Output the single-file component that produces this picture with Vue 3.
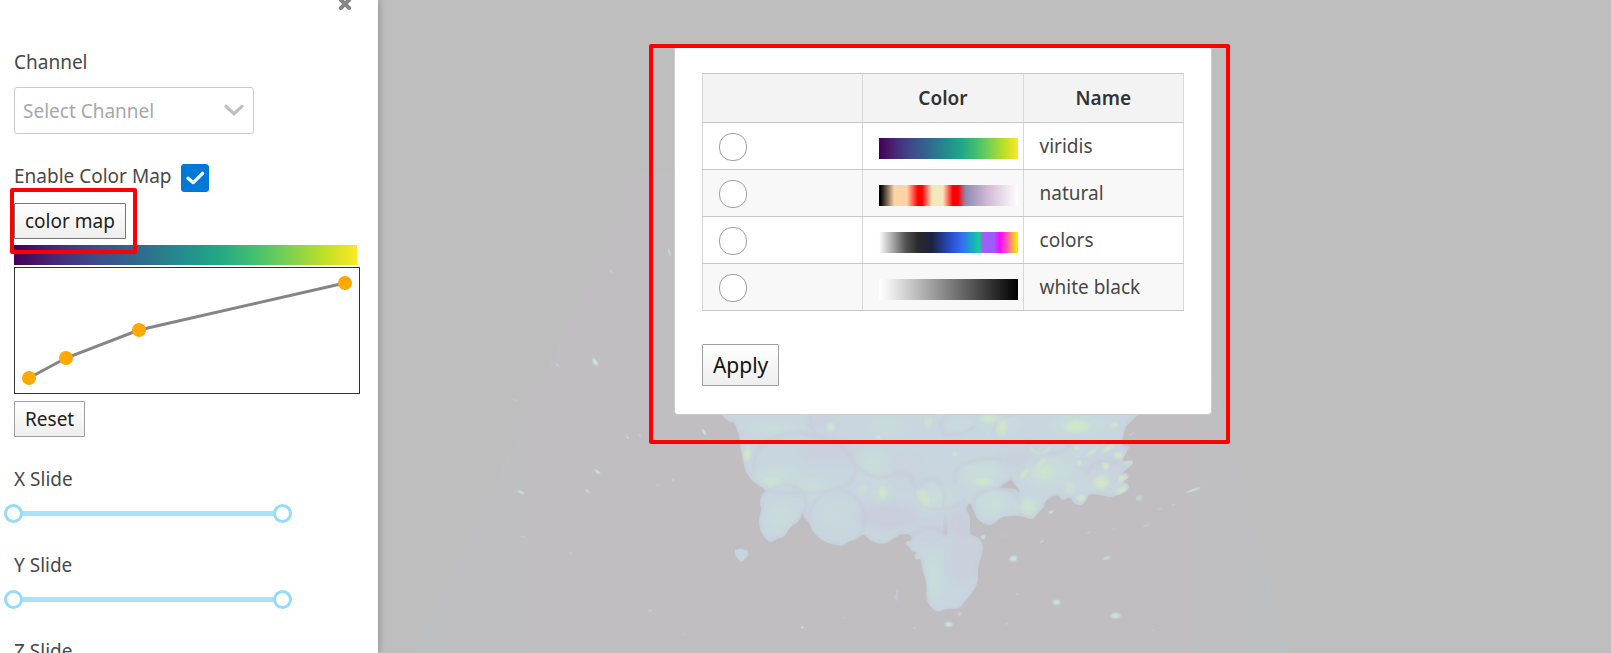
<script setup>
import { ref } from 'vue'

const channel = ref('')
const colorMapEnabled = ref(true)
const selectedMap = ref('')

const maps = [
  { id: 'viridis', name: 'viridis' },
  { id: 'natural', name: 'natural' },
  { id: 'colors', name: 'colors' },
  { id: 'white-black', name: 'white black' },
]

const points = [[14, 110], [51, 90], [124, 62], [330, 15]]
const line = points.map((p) => p.join(',')).join(' ')

const slides = ref([
  { axis: 'X', min: 0, max: 100 },
  { axis: 'Y', min: 0, max: 100 },
  { axis: 'Z', min: 0, max: 100 },
])

/* Closed curve through the midpoints of a ring of vertices */
function smooth(text) {
  const n = text.split(' ').map(Number)
  const ring = []
  for (let i = 0; i < n.length; i += 2) ring.push([n[i], n[i + 1]])
  const mid = (a, b) => [(a[0] + b[0]) / 2, (a[1] + b[1]) / 2]
  let d = 'M' + mid(ring[ring.length - 1], ring[0]).join(' ')
  ring.forEach((p, i) => {
    d += 'Q' + p.join(' ') + ' ' + mid(p, ring[(i + 1) % ring.length]).join(' ')
  })
  return d + 'Z'
}
const outline =
  smooth('50 15 65 45 85 66 104 66 112 92 120 115 122 150 130 185 136 212 150 235 172 255 202 272 182 286 180 318 186 325 177 352 178 388 195 414 213 430 228 416 252 412 266 388 276 376 296 366 309 336 310 350 319 360 327 366 336 392 355 412 378 428 403 433 427 440 440 426 475 416 491 400 508 420 540 434 572 424 602 400 636 404 634 424 618 422 618 434 630 440 634 456 652 454 642 470 650 482 662 472 666 510 682 552 678 596 690 620 712 638 742 624 778 628 794 604 818 578 836 544 832 496 850 456 846 420 820 406 808 406 812 350 795 328 809 305 820 330 830 356 850 370 870 376 890 366 904 350 950 346 978 352 998 360 1012 340 1034 320 1036 300 1073 280 1085 304 1110 288 1122 312 1143 318 1160 302 1166 280 1205 286 1230 292 1262 284 1290 266 1282 248 1264 246 1290 232 1278 218 1262 222 1300 192 1298 178 1266 188 1272 170 1292 136 1264 140 1274 80 1300 58 1340 20') +
  'M897 263 L932 238 956 268 957 278 945 267Z'

/* cx, cy, rx, ry, rotation, opacity */
const glows = [
  [220, 85, 110, 34, 0, 0.6], [560, 80, 80, 40, 0, 0.5], [780, 80, 60, 40, 0, 0.5],
  [900, 70, 90, 50, 0, 0.6], [1130, 75, 120, 44, 0, 0.6], [230, 230, 90, 44, 0, 0.7],
  [240, 350, 60, 60, 0, 0.6], [410, 345, 70, 66, 0, 0.35], [520, 195, 70, 60, 35, 0.7],
  [700, 290, 70, 50, 0, 0.7], [840, 220, 90, 56, 0, 0.8], [880, 310, 70, 56, 0, 0.8],
  [985, 320, 50, 40, 0, 0.8], [1040, 215, 90, 60, 0, 0.8], [1200, 240, 80, 50, 0, 0.7],
  [700, 530, 34, 90, 0, 0.7], [345, 265, 60, 46, 0, 0.7], [545, 280, 46, 44, 0, 0.6],
]
const lights = [
  [392, 82, 18, 22, 0, 0.9], [684, 66, 20, 28, 0, 0.6], [865, 55, 36, 18, 0, 0.8],
  [906, 82, 24, 40, 0, 0.8], [1130, 78, 56, 28, 0, 1], [1243, 74, 20, 12, -20, 0.9],
  [536, 112, 14, 12, 0, 0.6], [142, 162, 18, 34, 10, 0.9], [765, 162, 12, 12, 0, 0.9],
  [1130, 144, 14, 12, 0, 0.8], [1138, 188, 11, 12, 0, 1], [1216, 198, 16, 15, 0, 1],
  [1204, 246, 34, 30, 0, 1], [1256, 166, 18, 16, 0, 1], [1268, 236, 20, 14, 0, 1],
  [1266, 270, 28, 12, -25, 1], [1144, 294, 18, 14, 0, 1], [1110, 262, 28, 26, 0, 0.6],
  [1032, 216, 50, 34, 0, 0.6], [972, 222, 12, 30, 40, 0.8], [1024, 188, 22, 10, -40, 0.7],
  [1176, 156, 30, 10, -40, 0.8], [1226, 144, 34, 11, -25, 0.8], [850, 246, 46, 18, 0, 0.8],
  [548, 278, 18, 28, 0, 0.9], [486, 266, 24, 20, 0, 0.5], [216, 246, 46, 22, 0, 0.5],
  [984, 320, 34, 30, 0, 0.6], [672, 292, 24, 34, -25, 0.7], [1280, 188, 20, 9, -25, 0.8],
]
const shades = [
  [390, 156, 80, 30, 0.6], [560, 350, 90, 40, 0.7], [370, 68, 36, 22, 0.4],
  [1210, 214, 60, 50, 0.4], [775, 370, 36, 40, 0.7], [620, 212, 50, 50, 0.2],
  [800, 470, 50, 80, 0.6], [960, 178, 60, 30, 0.3], [690, 390, 60, 40, 0.4],
]
const specks = [
  [12, 96, 6, 13, -30, 0.9], [850, 411, 9, 8, -30, 0.9], [940, 476, 15, 12, -10, 1],
  [1025, 425, 9, 5, -30, 0.5], [1053, 336, 12, 5, -30, 0.8], [1220, 474, 15, 6, -15, 0.8],
  [1318, 294, 14, 10, -15, 0.6], [1480, 270, 27, 5, -20, 0.8], [1420, 315, 10, 4, -20, 0.3],
  [1380, 327, 9, 4, -20, 0.25], [1338, 377, 14, 5, -20, 0.35], [1243, 387, 11, 4, -20, 0.25],
  [1165, 398, 9, 4, -20, 0.3], [1186, 398, 5, 3, 0, 0.25], [907, 408, 5, 4, 0, 0.3],
  [1069, 607, 14, 10, 0, 1], [1247, 647, 18, 11, 0, 1], [746, 673, 15, 10, 0, 1],
  [779, 642, 7, 8, 20, 0.6], [952, 582, 7, 4, 0, 0.4], [920, 671, 6, 4, 0, 0.4],
  [307, 682, 6, 6, 0, 0.7], [432, 653, 5, 3, 0, 0.4], [643, 684, 6, 3, 20, 0.4],
  [1360, 691, 8, 3, 20, 0.25], [1296, 101, 11, 5, -35, 0.3], [335, 552, 2, 5, 0, 0.2],
  [266, 617, 3, 3, 0, 0.2], [-315, -114, 8, 16, -32, 1], [-92, -443, 4, 14, -15, 0.8],
  [-267, -386, 4, 8, -30, 0.4], [-308, 215, 6, 13, -55, 0.9], [-537, 277, 14, 6, 20, 0.8],
  [-337, 274, 11, 5, 40, 0.6], [-217, 113, 7, 5, 40, 0.5], [-180, 107, 8, 4, 50, 0.3],
  [-428, -105, 4, 12, -40, 0.3], [-555, 1, 9, 4, 35, 0.25], [-80, 241, 6, 6, 0, 0.4],
  [-127, 255, 5, 5, 0, 0.3], [-530, 411, 12, 4, 20, 0.3], [-388, 460, 6, 4, 30, 0.35],
  [-150, 632, 7, 4, 0, 0.5], [-47, 702, 4, 3, 0, 0.3],
]

function reset() {
  slides.value.forEach((s) => {
    s.min = 0
    s.max = 100
  })
}
</script>

<template>
  <div class="app">
    <aside class="sidebar">
      <button class="close" type="button" aria-label="Close">
        <svg width="14" height="14" viewBox="0 0 14 14" aria-hidden="true">
          <path d="M2.8 2.8 11.2 11.2M11.2 2.8 2.8 11.2" stroke="#868686" stroke-width="4" stroke-linecap="round" />
        </svg>
      </button>

      <label class="label" for="channel">Channel</label>
      <div class="select-wrap">
        <select id="channel" v-model="channel">
          <option value="">Select Channel</option>
        </select>
        <svg class="chevron" width="20" height="12" viewBox="0 0 20 12" aria-hidden="true">
          <path d="M2 2.3 10 9.7 18 2.3" fill="none" stroke="#c0c0c0" stroke-width="3.2" stroke-linecap="round" />
        </svg>
      </div>

      <div class="enable">
        <label for="enable-map">Enable Color Map</label>
        <span class="check">
          <input id="enable-map" v-model="colorMapEnabled" type="checkbox" />
          <svg v-if="colorMapEnabled" width="28" height="28" viewBox="0 0 28 28" aria-hidden="true">
            <path d="M7 14.3 12.3 18.6 21.6 9.4" fill="none" stroke="#fff" stroke-width="3.4" stroke-linecap="round" stroke-linejoin="round" />
          </svg>
        </span>
      </div>

      <div class="map-button">
        <button class="button" type="button">color map</button>
        <span class="marker marker-small"></span>
      </div>
      <div class="ramp viridis"></div>
      <svg class="curve" width="346" height="127" aria-label="Opacity curve">
        <polyline :points="line" fill="none" stroke="#858585" stroke-width="3" />
        <circle v-for="p in points" :key="p[0]" :cx="p[0]" :cy="p[1]" r="7" fill="#ffa800" />
      </svg>
      <button class="button reset" type="button" @click="reset">Reset</button>

      <div v-for="s in slides" :key="s.axis" class="slide">
        <label :for="'slide-' + s.axis">{{ s.axis }} Slide</label>
        <div class="range">
          <input :id="'slide-' + s.axis" v-model="s.min" type="range" min="0" max="100" />
          <input v-model="s.max" type="range" min="0" max="100" :aria-label="s.axis + ' Slide maximum'" />
        </div>
      </div>
    </aside>

    <main class="viewer">
      <svg class="scene" viewBox="378 0 1233 653" preserveAspectRatio="xMidYMax slice" aria-hidden="true">
        <defs>
          <filter id="soft" x="-50%" y="-50%" width="200%" height="200%"><feGaussianBlur stdDeviation="10" /></filter>
          <filter id="edge" x="-5%" y="-5%" width="110%" height="110%"><feGaussianBlur stdDeviation="3" /></filter>
          <radialGradient id="glow">
            <stop offset="0" stop-color="#cbe0d8" />
            <stop offset=".6" stop-color="#cadfd9" stop-opacity=".6" />
            <stop offset="1" stop-color="#c9dcdb" stop-opacity="0" />
          </radialGradient>
          <radialGradient id="light">
            <stop offset="0" stop-color="#d6e8c2" />
            <stop offset=".5" stop-color="#cfe5cd" stop-opacity=".8" />
            <stop offset="1" stop-color="#c9dcdb" stop-opacity="0" />
          </radialGradient>
          <radialGradient id="speck">
            <stop offset="0" stop-color="#cbe7d6" />
            <stop offset=".55" stop-color="#c5dcdf" />
            <stop offset="1" stop-color="#c4cbd5" stop-opacity=".3" />
          </radialGradient>
          <linearGradient id="cone">
            <stop offset="0" stop-color="#bdbfc0" />
            <stop offset=".18" stop-color="#c1bec1" />
            <stop offset=".85" stop-color="#c1bec1" />
            <stop offset="1" stop-color="#bdbfc0" />
          </linearGradient>
          <clipPath id="body">
            <path :d="outline" clip-rule="evenodd" />
          </clipPath>
        </defs>
        <path d="M415 653 640 172 1160 172 1288 653Z" fill="url(#cone)" />
        <g transform="translate(700 400) scale(.33333)">
          <g clip-path="url(#body)">
            <rect x="40" y="10" width="1310" height="640" fill="#c8d6df" />
            <ellipse v-for="(l, i) in glows" :key="i" :cx="l[0]" :cy="l[1]" :rx="l[2]" :ry="l[3]" :transform="`rotate(${l[4]} ${l[0]} ${l[1]})`" :opacity="l[5]" fill="url(#glow)" />
            <g filter="url(#soft)">
              <ellipse v-for="(s, i) in shades" :key="i" :cx="s[0]" :cy="s[1]" :rx="s[2]" :ry="s[3]" fill="#cbcbdb" :opacity="s[4]" />
            </g>
            <g fill="none" stroke="#c7cada" stroke-width="7" opacity=".6" filter="url(#edge)">
              <path d="M160 232Q150 145 215 116T325 104Q450 120 466 210Q465 255 400 270T205 275" />
              <path d="M326 366Q330 280 410 268Q486 280 493 350Q500 400 455 425" />
              <path d="M182 292Q240 230 300 270Q330 305 309 342" />
              <path d="M466 190Q500 240 565 230Q630 200 640 250Q650 310 712 330Q775 320 797 300" />
              <path d="M650 270Q655 235 700 236Q745 260 730 320M765 250Q760 200 800 190Q850 170 905 180" />
              <path d="M820 320Q815 270 900 266Q970 270 960 342M332 45Q325 80 350 110" />
              <path d="M735 110Q710 60 745 45M735 105Q790 110 825 75M880 100Q880 50 945 45M980 120Q1000 170 1060 160T1110 120M1160 220Q1190 170 1250 190" />
              <path d="M635 408Q700 360 735 405" />
            </g>
            <ellipse v-for="(l, i) in lights" :key="i" :cx="l[0]" :cy="l[1]" :rx="l[2]" :ry="l[3]" :transform="`rotate(${l[4]} ${l[0]} ${l[1]})`" :opacity="l[5]" fill="url(#light)" />
            <path d="M990 138Q1000 165 1035 158L1050 140M652 270Q655 308 700 318" fill="none" stroke="#d3e6c6" stroke-width="8" opacity=".6" filter="url(#edge)" />
            <path :d="outline" fill="none" stroke="#c7c9d6" stroke-width="8" opacity=".6" filter="url(#edge)" />
            <path d="M736 340 730 405 742 405Z" fill="#c1bec5" opacity=".7" filter="url(#edge)" />
          </g>
          <path d="M105 450 124 446 143 452 144 466 127 485 117 480 105 464Z" fill="#c6d6df" />
          <path d="M589 564 596 570 593 590 595 605 582 594 589 582Z" fill="#c5c7d8" />
          <ellipse v-for="(s, i) in specks" :key="i" :cx="s[0]" :cy="s[1]" :rx="s[2]" :ry="s[3]" :transform="`rotate(${s[4]} ${s[0]} ${s[1]})`" :opacity="s[5]" fill="url(#speck)" />
        </g>
      </svg>

      <section class="dialog" role="dialog" aria-label="Color map">
        <table>
          <thead>
            <tr><th></th><th>Color</th><th>Name</th></tr>
          </thead>
          <tbody>
            <tr v-for="m in maps" :key="m.id">
              <td class="pick"><input :id="m.id" v-model="selectedMap" type="radio" name="map" :value="m.id" /></td>
              <td class="color"><div class="swatch" :class="m.id"></div></td>
              <td><label :for="m.id">{{ m.name }}</label></td>
            </tr>
          </tbody>
        </table>
        <button class="button apply" type="button">Apply</button>
        <span class="marker marker-large"></span>
      </section>
    </main>
  </div>
</template>

<style>
body {
  overflow: hidden;
}
</style>

<style scoped>
.app {
  display: flex;
  height: 100vh;
  overflow: hidden;
  font: 400 19px/24px "Noto Sans", "Open Sans", sans-serif;
  color: #484848;
}
.app * {
  box-sizing: border-box;
}
.sidebar {
  position: relative;
  z-index: 1;
  display: flex;
  flex-direction: column;
  align-items: flex-start;
  flex: 0 0 378px;
  padding: 50px 14px 0;
  background: #fff;
  box-shadow: 0 0 8px rgba(0, 0, 0, 0.3);
}
.sidebar > * {
  flex-shrink: 0;
}
.close {
  position: absolute;
  top: -3px;
  right: 26px;
  padding: 0;
  border: 0;
  background: none;
}
.close svg,
.chevron {
  display: block;
}
.select-wrap {
  position: relative;
  margin-top: 13px;
}
select {
  appearance: none;
  display: block;
  width: 240px;
  height: 47px;
  padding: 0 40px 0 8px;
  border: 1px solid #ccc;
  border-radius: 3px;
  background: #fff;
  color: #a8a8a8;
  font: inherit;
}
.chevron {
  position: absolute;
  top: 17px;
  right: 10px;
  pointer-events: none;
}
.enable {
  display: flex;
  align-items: flex-start;
  gap: 10px;
  margin-top: 30px;
}
.check {
  display: grid;
}
.check > * {
  grid-area: 1 / 1;
}
.check svg {
  pointer-events: none;
}
.check input {
  appearance: none;
  width: 28px;
  height: 28px;
  margin: 0;
  border: 1px solid #0078d7;
  border-radius: 3px;
}
.check input:checked {
  background: #0078d7;
}
.map-button {
  position: relative;
  margin-top: 11px;
}
.button {
  display: block;
  height: 36px;
  padding: 0 10px;
  border: 1px solid #a0a0a0;
  border-radius: 1px;
  background: linear-gradient(#fff, #eee);
  color: #222;
  font: inherit;
}
.map-button .button {
  border-color: #767676;
}
.marker {
  position: absolute;
  border: 4px solid #f00;
  border-radius: 2px;
  pointer-events: none;
}
.marker-small {
  inset: -15px -11px -15px -4px;
}
.marker-large {
  inset: -3px -19px -30px -26px;
}
.ramp {
  width: 343px;
  height: 20px;
  margin-top: 6px;
}
.curve {
  display: block;
  margin-top: 2px;
  border: 1px solid #333;
}
.reset {
  margin-top: 7px;
}
.slide {
  margin-top: 30px;
}
.slide label {
  display: block;
}
.range {
  display: grid;
  width: 288px;
  margin: 13px 0 0 -10px;
  background: linear-gradient(#a8e2fb, #a8e2fb) center / 269px 5px no-repeat;
}
.range input {
  grid-area: 1 / 1;
  appearance: none;
  width: 100%;
  height: 19px;
  margin: 0;
  background: none;
  pointer-events: none;
}
.range input::-webkit-slider-thumb {
  appearance: none;
  box-sizing: border-box;
  width: 19px;
  height: 19px;
  border: 3px solid #96dbfa;
  border-radius: 50%;
  background: #fff;
  pointer-events: auto;
}
.viewer {
  position: relative;
  flex: 1;
  min-width: 0;
  background: #bebebe;
}
.scene {
  position: absolute;
  inset: 0;
  width: 100%;
  height: 100%;
}
.dialog {
  position: absolute;
  top: 46px;
  left: 24%;
  width: 538px;
  padding: 26px 27px 28px;
  border: 1px solid #ccc;
  border-radius: 4px;
  background: #fff;
}
table {
  width: 100%;
  border-collapse: collapse;
  table-layout: fixed;
}
th,
td {
  height: 47px;
  padding: 0 16px;
  border: 1px solid #c8c8c8;
  border-right-color: #d8d8d8;
  border-left-color: #d8d8d8;
  text-align: left;
}
th {
  height: 49px;
  background: #f3f3f3;
  color: #333;
  font-weight: 600;
  text-align: center;
}
tbody tr:nth-child(even) {
  background: #f8f8f8;
}
.pick {
  padding-top: 1px;
}
.pick input {
  appearance: none;
  display: block;
  width: 28px;
  height: 28px;
  margin: 0;
  border: 1px solid #a0a0a0;
  border-radius: 13px;
  background: #fff;
}
.pick input:checked {
  border: 8px solid #0078d7;
}
.color {
  padding: 4px 5px 0 16px;
}
.swatch {
  height: 21px;
}
.viridis {
  background: linear-gradient(90deg, #440154, #482878 12%, #3e4a89 23%, #31688e 36%, #21908d 50%, #22a884 60%, #43bf71 70%, #7ad151 80%, #bbdf27 90%, #fde725);
}
.natural {
  background: linear-gradient(90deg, #000 1%, #ffd3a8 11%, #ffd3a8 20%, #f00 28%, #f00 31%, #f4e6bd 38%, #f4e6bd 46%, #f00 53%, #f00 57%, #8b89b0 62%, #d3b9d6 78%, #fcfcfc 99%);
}
.colors {
  background: linear-gradient(90deg, #fff, #555 19%, #2a2a2a 28%, #1c2340 38%, #2849bd 50%, #3464f0 58%, #1ea0cf 66%, #10d196 72%, #a65cf8 75%, #9a5cff 83%, #f0f 87%, #ff6ba0 93%, #ffe600 99%);
}
.white-black {
  background: linear-gradient(90deg, #fff, #f5f5f5 5%, #000);
}
.apply {
  height: 42px;
  margin-top: 33px;
  color: #111;
  font-size: 21px;
}
</style>
